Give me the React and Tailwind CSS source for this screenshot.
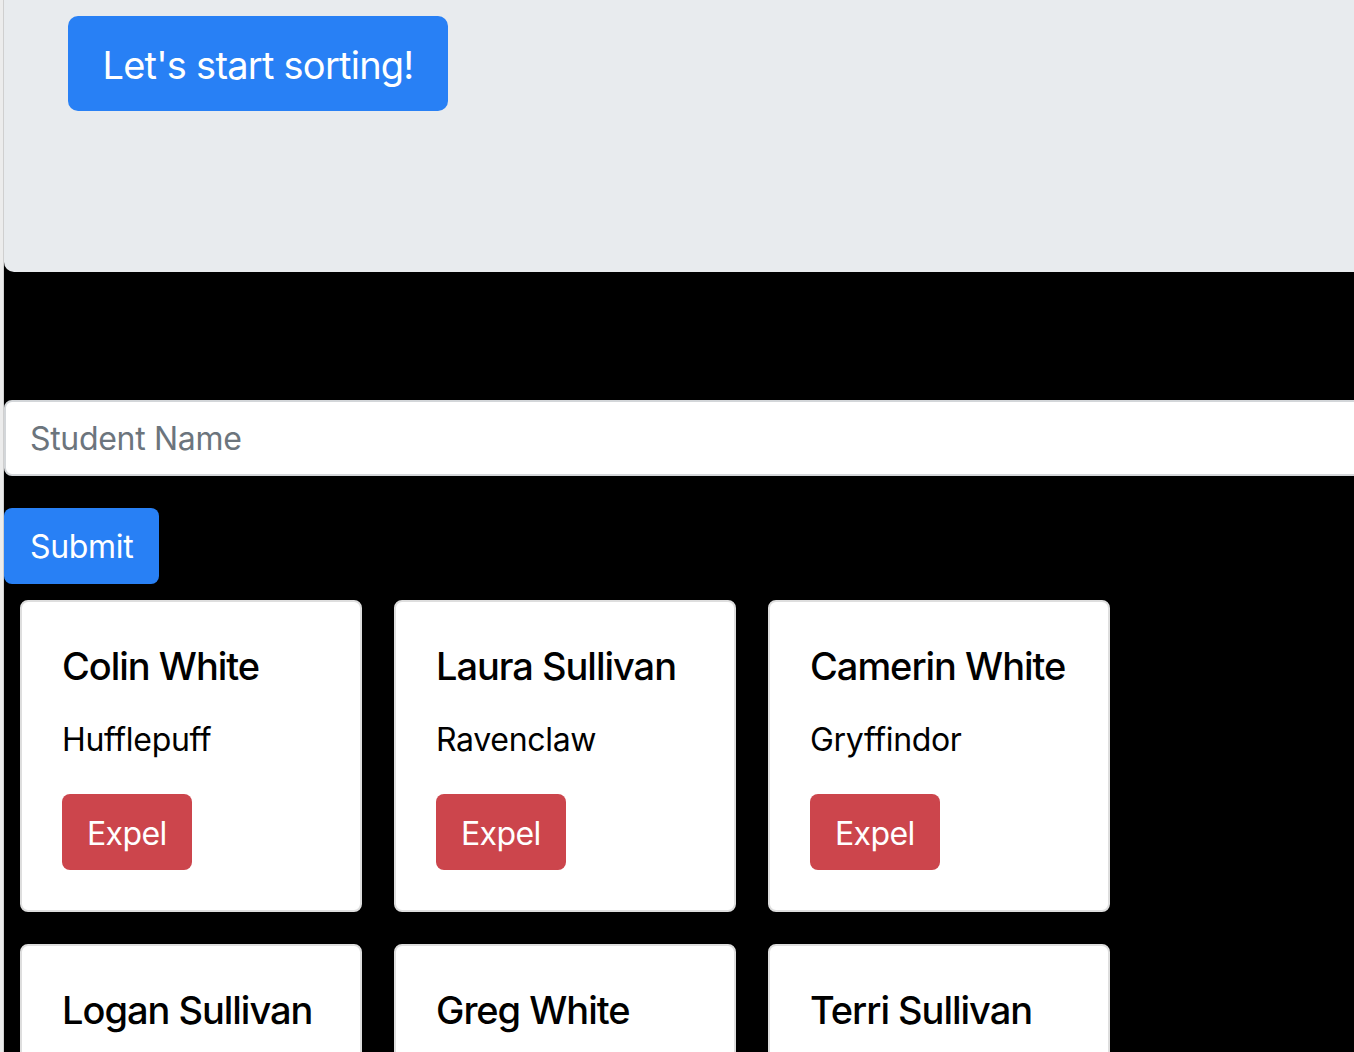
import React from "react";

const students = [
  { name: "Colin White", house: "Hufflepuff" },
  { name: "Laura Sullivan", house: "Ravenclaw" },
  { name: "Camerin White", house: "Gryffindor" },
  { name: "Logan Sullivan", house: "Slytherin" },
  { name: "Greg White", house: "Hufflepuff" },
  { name: "Terri Sullivan", house: "Ravenclaw" },
];

function StudentCard({ student }) {
  return (
    <div className="m-4 w-[342px] rounded-[8px] border-2 border-[#dedede] bg-white">
      <div className="p-10">
        <h5 className="mb-6 whitespace-nowrap text-[38px] leading-[48px] font-medium tracking-[-0.027em] text-black">
          {student.name}
        </h5>
        <p className="mb-8 pt-[2px] h-[48px] text-[32px] leading-[48px] tracking-[-0.01em] text-black">
          {student.house}
        </p>
        <button className="h-[76px] rounded-[8px] bg-[#cc454c] px-[25px] pt-[3px] text-[32px] leading-[48px] tracking-[-0.02em] text-white">
          Expel
        </button>
      </div>
    </div>
  );
}

export default function App() {
  return (
    <div
      className="flex min-h-[1052px] overflow-hidden bg-black"
      style={{ fontFamily: "Inter, 'Noto Sans', sans-serif" }}
    >
      {/* left gutter */}
      <div className="w-[4px] shrink-0 border-r border-[#cfcfcf] bg-[#ececec]" />

      <div className="w-[1500px] shrink-0">
        {/* Jumbotron */}
        <div className="h-[272px] rounded-bl-[10px] bg-[#e8ebee] pt-4 pl-16">
          <button className="h-[95px] w-[380px] rounded-[10px] bg-[#2880f5] pt-[3px] text-[38px] tracking-[-0.02em] text-white">
            Let's start sorting!
          </button>
        </div>

        {/* Form */}
        <div className="mt-[128px]">
          <input
            type="text"
            placeholder="Student Name"
            className="block h-[76px] w-full rounded-[8px] border-2 border-[#d3d6d9] bg-white px-6 text-[32px] tracking-[-0.01em] text-black placeholder:text-[#6c757d] outline-none"
          />
          <button className="mt-8 h-[76px] rounded-[8px] bg-[#2880f5] px-[26px] pt-[2px] text-[32px] tracking-[-0.01em] text-white">
            Submit
          </button>
        </div>

        {/* Cards */}
        <div className="flex w-[1122px] flex-wrap">
          {students.map((s) => (
            <StudentCard key={s.name} student={s} />
          ))}
        </div>
      </div>
    </div>
  );
}
